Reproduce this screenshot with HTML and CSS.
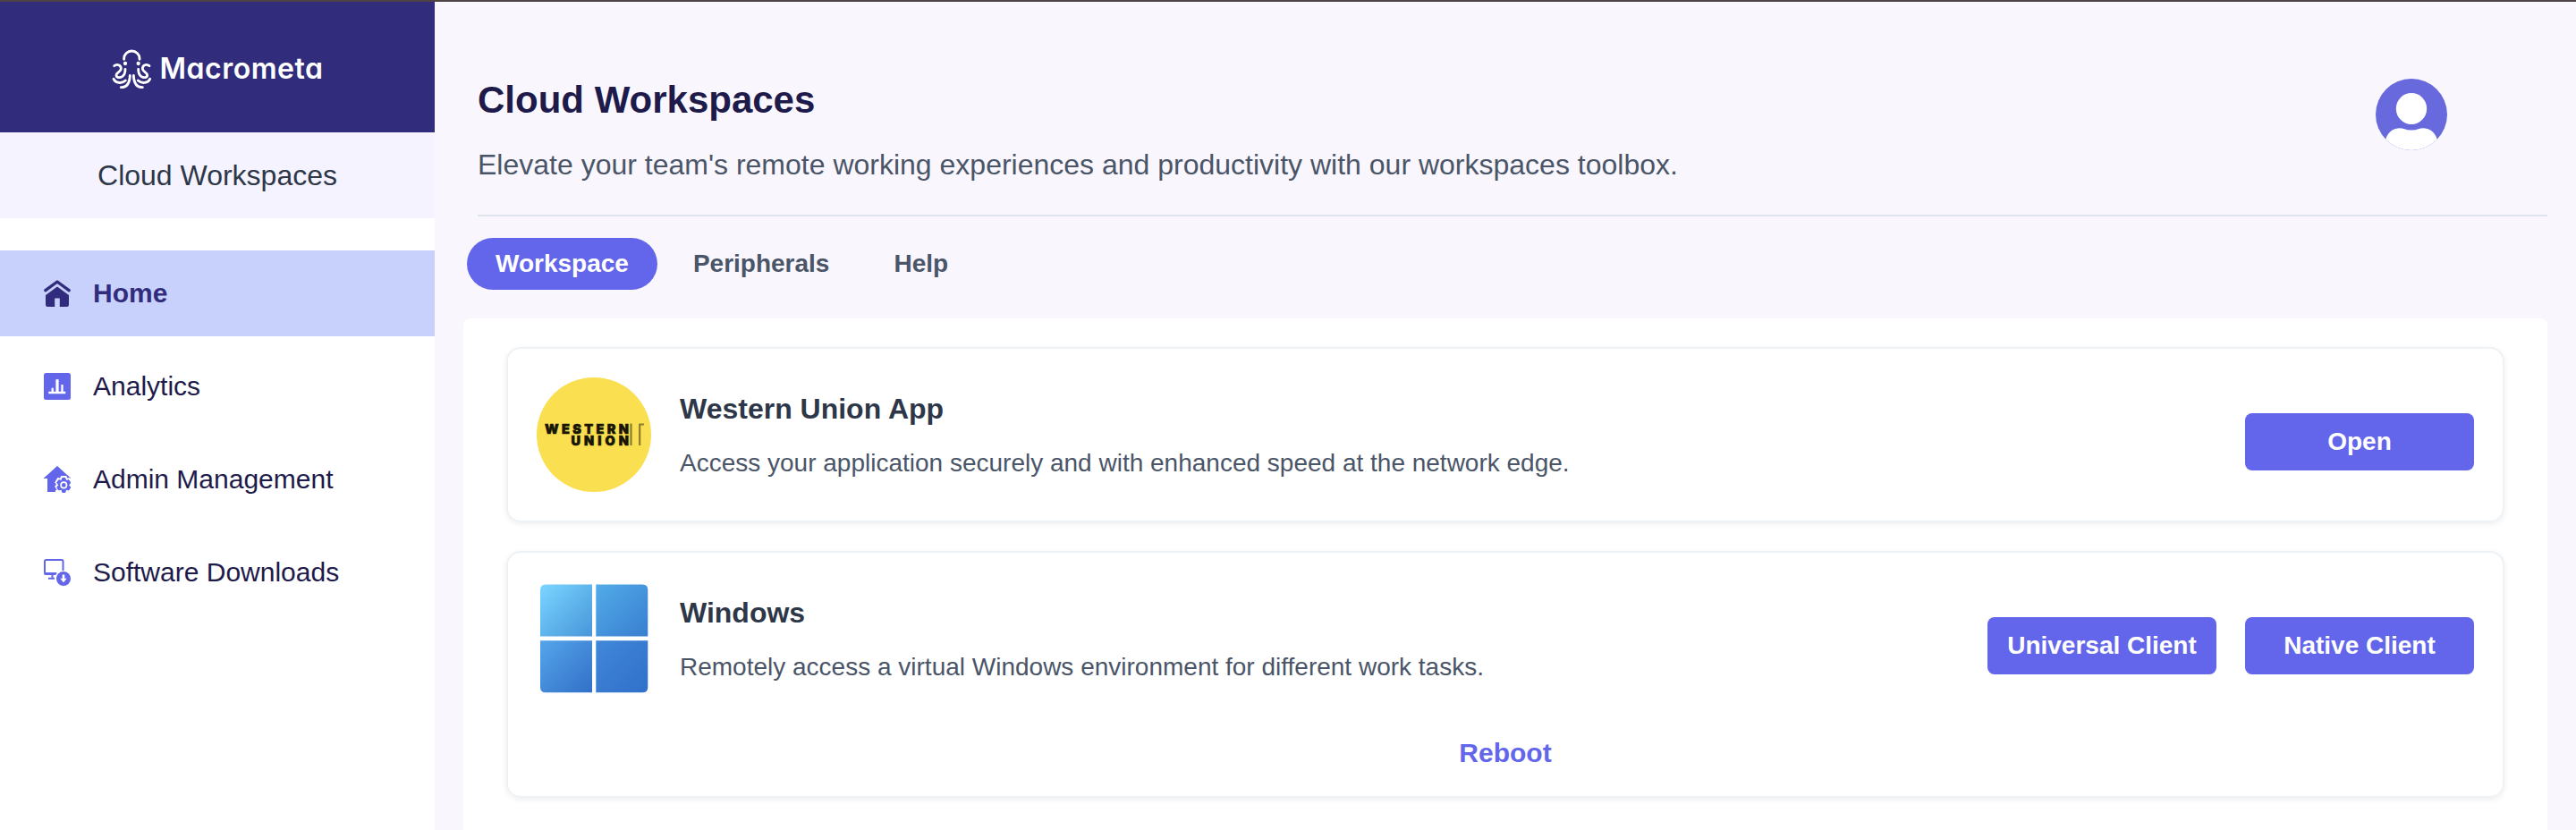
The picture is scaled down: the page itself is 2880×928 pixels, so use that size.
FILE: index.html
```
<!DOCTYPE html>
<html lang="en">
<head>
<meta charset="utf-8">
<title>Cloud Workspaces</title>
<link rel="stylesheet" href="styles.css">
</head>
<body>
<div class="app">
  <aside class="sidebar">
    <div class="brand">
      <svg class="brand-mark" viewBox="42 42 132 135" fill="none" stroke="#fff" stroke-width="8.500" stroke-linecap="round">
        <path d="M83 76V73A26 25 0 0 1 135 73V76"/>
        <g id="arms">
          <circle cx="87" cy="90" r="6.500" fill="#fff" stroke="none"/>
          <path d="M50 98C60 90 73 96 73 107C73 118 57 119 57 129C57 138 69 139 77 134C85 129 87 119 87 109"/>
          <path d="M48 142C54 157 76 158 88 147"/>
          <path d="M73 170C92 170 102 156 103 130"/>
        </g>
        <use href="#arms" transform="matrix(-1 0 0 1 218 0)"/>
      </svg>
      <span class="brand-name">Macrometa</span>
    </div>
    <div class="product">Cloud Workspaces</div>
    <nav class="menu">
      <a class="menu-item active">
        <svg class="menu-icon" viewBox="0 0 30 30"><path d="M1.900 11.700L15 2L28.100 11.700" fill="none" stroke="currentColor" stroke-width="3.400" stroke-linecap="round" stroke-linejoin="round"/><path d="M15 7.500L28 17V27.500Q28 30 25.500 30H17.800V20.500H12.200V30H4.500Q2 30 2 27.500V17Z" fill="currentColor"/></svg>
        <span>Home</span>
      </a>
      <a class="menu-item">
        <svg class="menu-icon" viewBox="0 0 30 30"><rect width="30" height="30" rx="2.500" fill="currentColor"/><path d="M5.300 22H24.300M9.700 22V16.800M20.500 22V13" fill="none" stroke="#fff" stroke-width="2.300"/><path d="M15 22V7.200" stroke="#fff" stroke-width="3.200"/></svg>
        <span>Analytics</span>
      </a>
      <a class="menu-item">
        <svg class="menu-icon" viewBox="0 0 30 30"><path d="M15 0L30.500 14H26.500V29H4V14H-.5Z" fill="currentColor"/><path d="M20.200 12.500H24.300L25.300 15.400L28.300 14.700L30.400 18.200L28.300 20.500L30.400 22.900L28.300 26.500L25.300 25.800L24.300 29H20.200L19.200 25.800L16.100 26.500L14 22.900L16.100 20.500L14 18.200L16.100 14.700L19.200 15.400Z" fill="#fff" stroke="#fff" stroke-width="3"/><path d="M13 27H31V31H13Z" fill="#fff"/><path d="M20.800 13.500H23.800L24.700 16.500L27.800 15.700L29.800 18.600L27.800 21.300L29.800 24L27.800 27L24.700 26.200L23.800 29.500H20.800L19.800 26.200L16.700 27L14.700 24L16.700 21.300L14.700 18.600L16.700 15.700L19.800 16.500Z" fill="currentColor" stroke="currentColor" stroke-linejoin="round"/><circle cx="22.300" cy="21.400" r="3.200" fill="none" stroke="#fff" stroke-width="1.700"/></svg>
        <span>Admin Management</span>
      </a>
      <a class="menu-item">
        <svg class="menu-icon" viewBox="0 0 30 30"><path d="M21.500 13V2.500Q21.500 1 20 1H2.500Q1 1 1 2.500V14.500Q1 16 2.500 16H14" fill="none" stroke="currentColor" stroke-width="2"/><path d="M1 15.500H15L13 18H2Q0 18 0 16Z" fill="currentColor"/><path d="M9.500 17V21.500M5 21.800H12" fill="none" stroke="currentColor" stroke-width="2"/><circle cx="22" cy="22" r="8" fill="currentColor"/><path d="M20.700 17.500H23.300V21.700H25.700L22 26.200L18.300 21.700H20.700Z" fill="#fff"/></svg>
        <span>Software Downloads</span>
      </a>
    </nav>
  </aside>
  <main class="main">
    <header class="page-head">
      <div>
        <h1 class="page-title">Cloud Workspaces</h1>
        <p class="page-lead">Elevate your team's remote working experiences and productivity with our workspaces toolbox.</p>
      </div>
      <svg class="avatar" viewBox="0 0 80 80"><defs><clipPath id="disc"><circle cx="40" cy="40" r="40"/></clipPath></defs><g clip-path="url(#disc)"><rect width="80" height="80" fill="#6769dd"/><ellipse cx="40" cy="33.500" rx="17.200" ry="17.500" fill="#fff"/><path d="M11 68C15 56 25 54 31.500 56Q40 59 48.500 56C55 54 65 56 69 68V80H11Z" fill="#fff"/></g></svg>
    </header>
    <div class="tabs">
      <button class="tab selected">Workspace</button>
      <button class="tab">Peripherals</button>
      <button class="tab">Help</button>
    </div>
    <section class="panel">
      <article class="card">
        <div class="card-row">
          <svg class="card-logo" viewBox="0 0 128 128"><circle cx="64" cy="64" r="64" fill="#fadf50"/><g class="wu-text"><text x="9" y="62.500" textLength="94">WESTERN</text><text x="38.500" y="75.700" textLength="64.500">UNION</text></g><path d="M105.500 51.500V76M115.200 76V52.500H120" fill="none" stroke="#8b7c31" stroke-width="2.200"/></svg>
          <div class="card-text">
            <h2 class="card-title">Western Union App</h2>
            <p class="card-desc">Access your application securely and with enhanced speed at the network edge.</p>
          </div>
          <div class="actions"><button class="button">Open</button></div>
        </div>
      </article>
      <article class="card">
        <div class="card-row">
          <svg class="card-logo" viewBox="0 0 128 128">
            <defs>
              <linearGradient id="w1" x1="0" y1="0" x2="1" y2="1"><stop stop-color="#7ad5ff"/><stop offset="1" stop-color="#4796da"/></linearGradient>
              <linearGradient id="w2" x1="0" y1="0" x2="1" y2="1"><stop stop-color="#51ace8"/><stop offset="1" stop-color="#397ed0"/></linearGradient>
              <linearGradient id="w3" x1="0" y1="0" x2="1" y2="1"><stop stop-color="#55a5ea"/><stop offset="1" stop-color="#3270c8"/></linearGradient>
              <linearGradient id="w4" x1="0" y1="0" x2="1" y2="1"><stop stop-color="#4087d9"/><stop offset="1" stop-color="#3070c9"/></linearGradient>
            </defs>
            <path d="M10 3.500H62V61.500H4V9.500Q4 3.500 10 3.500Z" fill="url(#w1)"/>
            <path d="M66.300 3.500H118.300Q124.300 3.500 124.300 9.500V61.500H66.300Z" fill="url(#w2)"/>
            <path d="M4 66.300H62V124.300H10Q4 124.300 4 118.300Z" fill="url(#w3)"/>
            <path d="M66.300 66.300H124.300V118.300Q124.300 124.300 118.300 124.300H66.300Z" fill="url(#w4)"/>
          </svg>
          <div class="card-text">
            <h2 class="card-title">Windows</h2>
            <p class="card-desc">Remotely access a virtual Windows environment for different work tasks.</p>
          </div>
          <div class="actions"><button class="button">Universal Client</button><button class="button">Native Client</button></div>
        </div>
        <div class="card-foot"><a class="reboot">Reboot</a></div>
      </article>
    </section>
  </main>
</div>
</body>
</html>
```
FILE: styles.css
```
* { box-sizing: border-box; }
html, body { height: 928px; overflow: hidden; }
body {
  margin: 0;
  font-family: "Liberation Sans", Arial, sans-serif;
  background: #f9f7fd;
}
h1, h2, p { margin: 0; }
button { border: 0; font-family: inherit; }
.app {
  display: flex;
  height: 928px;
  overflow: hidden;
  border-top: 2px solid #4d4346;
}

.sidebar { flex: none; width: 486px; background: #fff; }
.brand {
  display: flex;
  align-items: center;
  justify-content: center;
  gap: 10px;
  height: 146px;
  padding-top: 4px;
  background: #312d7c;
  color: #fff;
}
.brand-mark { width: 44px; height: 45px; }
.brand-name {
  font: 600 32px/40px Inter, sans-serif;
  font-feature-settings: "cv11";
  letter-spacing: .5px;
}
.product {
  height: 96px;
  background: #f5f3ff;
  color: #2d3748;
  font-size: 32px;
  line-height: 96px;
  text-align: center;
}
.menu {
  display: flex;
  flex-direction: column;
  gap: 8px;
  padding-top: 36px;
}
.menu-item {
  display: flex;
  align-items: center;
  gap: 25px;
  height: 96px;
  padding-left: 49px;
  color: #1e1b4b;
  font-size: 30px;
}
.menu-item.active { background: #c8d1fc; color: #312d7c; font-weight: bold; }
.menu-icon { width: 30px; height: 30px; color: #6366ea; }
.active .menu-icon { color: #312d7c; }

.main { flex: 1; height: 926px; padding: 0 32px; overflow: hidden; }
.page-head {
  display: flex;
  justify-content: space-between;
  height: 240px;
  margin-left: 16px;
  padding: 84px 112px 0 0;
  border-bottom: 2px solid #e0e4ec;
}
.page-title { color: #1e1b4b; font-size: 42px; line-height: 52px; }
.page-lead { margin-top: 26px; color: #4a5568; font-size: 32px; line-height: 40px; }
.avatar { width: 80px; height: 80px; margin-top: 2px; }
.tabs { display: flex; gap: 8px; margin: 24px 0 32px 4px; }
.tab {
  height: 58px;
  padding: 0 32px;
  border-radius: 29px;
  background: none;
  color: #4a5568;
  font-size: 28px;
  font-weight: bold;
}
.tab.selected { background: #6366ea; color: #fff; }

.panel {
  display: flex;
  flex-direction: column;
  gap: 32px;
  height: 600px;
  padding: 32px 48px;
  border-radius: 8px;
  background: #fff;
}
.card {
  padding: 32px;
  border: 2px solid #edf2f7;
  border-radius: 16px;
  box-shadow: 0 2px 6px rgba(0, 0, 0, .07);
}
.card-row { display: flex; align-items: center; }
.card-logo { flex: none; width: 128px; height: 128px; }
.wu-text { font: 900 14.5px Inter, sans-serif; fill: #171505; stroke: #171505; stroke-width: .6px; }
.card-text { flex: 1; padding: 1px 0 0 32px; }
.card-title { color: #2d3748; font-size: 32px; line-height: 40px; }
.card-desc { margin-top: 23px; color: #4a5568; font-size: 28px; line-height: 36px; }
.actions { display: flex; gap: 32px; padding-top: 16px; }
.button {
  width: 256px;
  height: 64px;
  border-radius: 8px;
  background: #6366ea;
  color: #fff;
  font-size: 28px;
  font-weight: bold;
}
.card-foot { padding-top: 46px; height: 80px; text-align: center; }
.reboot { color: #6366ea; font-size: 30px; font-weight: bold; line-height: 36px; }
```
